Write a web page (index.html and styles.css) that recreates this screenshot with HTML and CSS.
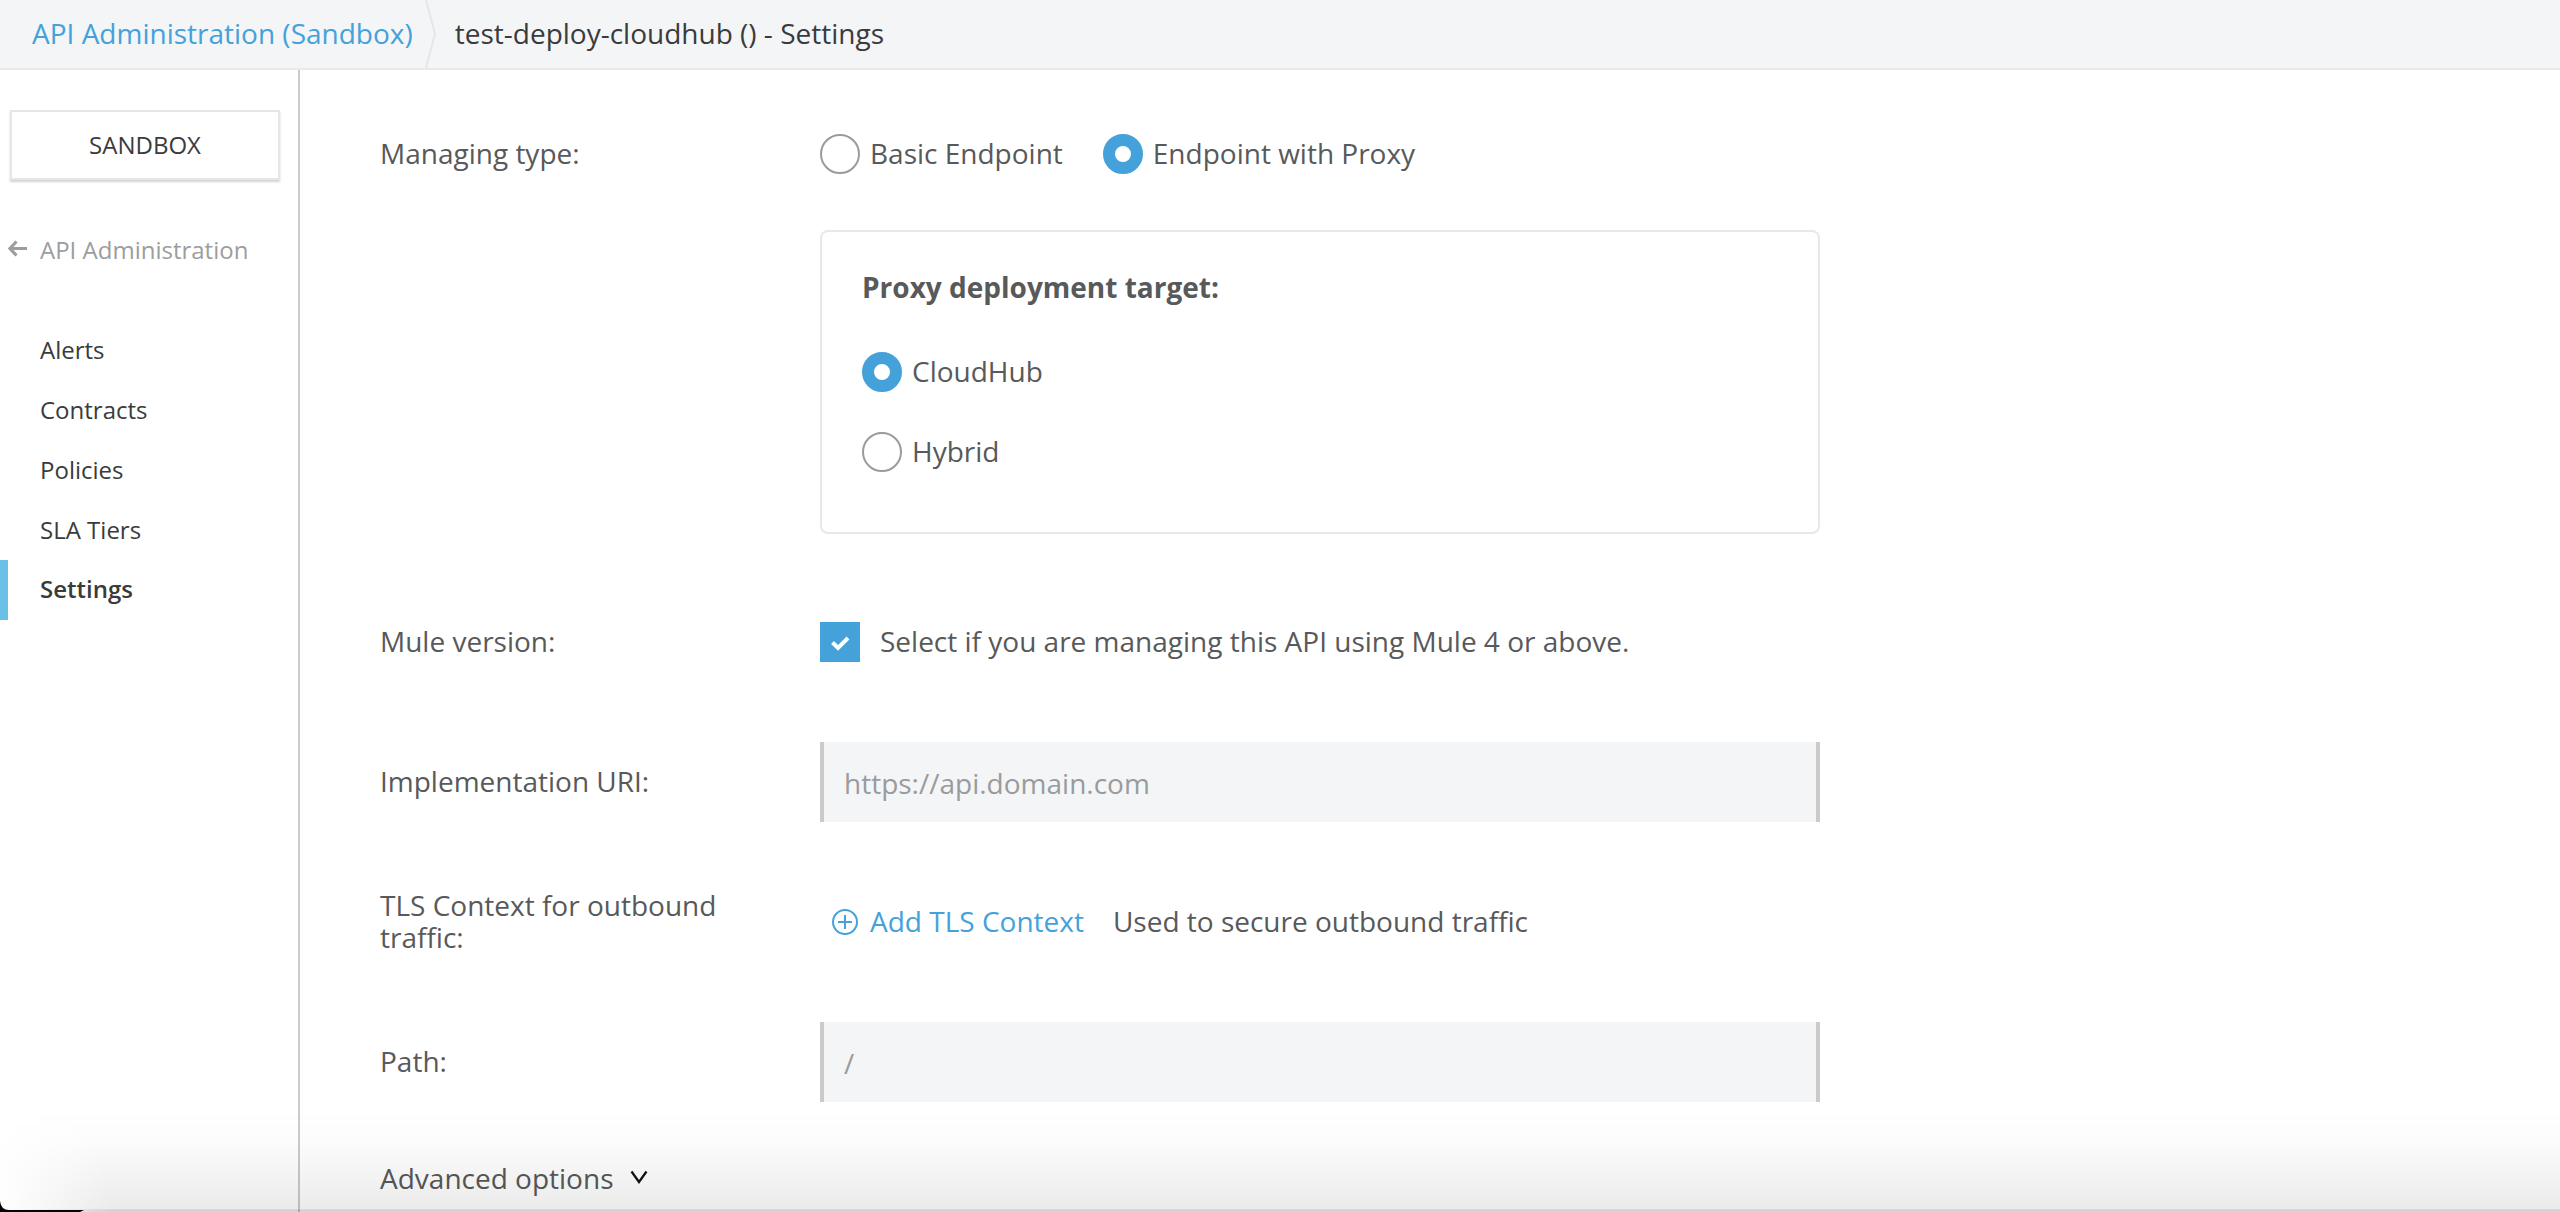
FILE: index.html
```html
<!DOCTYPE html>
<html lang="en">
<head>
<meta charset="utf-8">
<meta name="viewport" content="width=device-width, initial-scale=1">
<title>test-deploy-cloudhub () - Settings</title>
<link rel="stylesheet" href="styles.css">
</head>
<body>
<header class="topbar">
  <a class="crumb-link" href="#">API Administration (Sandbox)</a>
  <svg class="crumb-sep" viewBox="0 0 12 68" aria-hidden="true"><path d="M1 0 L10 34 L1 68" fill="none" stroke="#e5e6e8" stroke-width="2"/></svg>
  <h1 class="crumb-current">test-deploy-cloudhub () - Settings</h1>
</header>
<div class="layout">
  <aside class="sidebar">
    <button class="env-button" type="button">SANDBOX</button>
    <a class="back-link" href="#">
      <svg class="back-icon" viewBox="0 0 20 20" aria-hidden="true"><path d="M8.500 1.500 L2 8.500 L8.500 15.500 M2 8.500 H19" fill="none" stroke="currentColor" stroke-width="3.200"/></svg>
      <span>API Administration</span>
    </a>
    <nav class="menu">
      <a class="menu-item" href="#">Alerts</a>
      <a class="menu-item" href="#">Contracts</a>
      <a class="menu-item" href="#">Policies</a>
      <a class="menu-item" href="#">SLA Tiers</a>
      <a class="menu-item active" href="#" aria-current="page">Settings</a>
    </nav>
  </aside>
  <main class="content">
    <form class="settings">
      <div class="row row-top" role="radiogroup" aria-labelledby="managing">
        <span class="row-label" id="managing">Managing type:</span>
        <div class="managing">
          <div class="choices">
            <label class="choice"><input class="radio" type="radio" name="type"><span class="text">Basic Endpoint</span></label>
            <label class="choice"><input class="radio" type="radio" name="type" checked><span class="text">Endpoint with Proxy</span></label>
          </div>
          <fieldset class="target">
            <legend class="target-title">Proxy deployment target:</legend>
            <label class="choice"><input class="radio" type="radio" name="target" checked><span class="text">CloudHub</span></label>
            <label class="choice"><input class="radio" type="radio" name="target"><span class="text">Hybrid</span></label>
          </fieldset>
        </div>
      </div>
      <div class="row">
        <span class="row-label">Mule version:</span>
        <label class="check">
          <span class="check-box">
            <input class="check-input" type="checkbox" checked>
            <svg class="check-mark" viewBox="0 0 40 40" aria-hidden="true"><path d="M12.500 20.500 L18 26 L28 16" fill="none" stroke="#fff" stroke-width="4"/></svg>
          </span>
          <span class="text">Select if you are managing this API using Mule 4 or above.</span>
        </label>
      </div>
      <div class="row">
        <label class="row-label" for="uri">Implementation URI:</label>
        <input class="field" id="uri" type="text" placeholder="https://api.domain.com">
      </div>
      <div class="row">
        <span class="row-label">TLS Context for outbound traffic:</span>
        <div class="tls">
          <button class="add-button" type="button">
            <svg class="add-icon" viewBox="0 0 26 26" aria-hidden="true"><path d="M13 6 V20 M6 13 H20" stroke="currentColor" stroke-width="2"/><circle cx="13" cy="13" r="12" fill="none" stroke="currentColor" stroke-width="2"/></svg>
            <span class="text">Add TLS Context</span>
          </button>
          <span class="text">Used to secure outbound traffic</span>
        </div>
      </div>
      <div class="row">
        <label class="row-label" for="path">Path:</label>
        <input class="field" id="path" type="text" placeholder="/">
      </div>
      <button class="advanced" type="button">
        <span class="text">Advanced options</span>
        <svg class="advanced-icon" viewBox="0 0 18 18" aria-hidden="true"><path d="M1.500 1.500 L9 12 L16.500 1.500" fill="none" stroke="#111" stroke-width="2.200"/></svg>
      </button>
    </form>
  </main>
</div>
<div class="window-shade" aria-hidden="true"></div>
<svg class="window-corner" viewBox="0 0 84 12" aria-hidden="true"><path d="M0 1 Q1 10 9 10 H84 L80 12 H0 Z" fill="#000"/></svg>
</body>
</html>
```
FILE: styles.css
```css
* {
  box-sizing: border-box;
}

body {
  margin: 0;
  height: 100vh;
  display: flex;
  flex-direction: column;
  overflow: hidden;
  background: #fff;
  color: #58595a;
  font-family: "Open Sans", sans-serif;
  font-size: 28px;
  line-height: 32px;
}

a {
  color: inherit;
  text-decoration: none;
}

button {
  padding: 0;
  border: 0;
  background: none;
  color: inherit;
  font: inherit;
  cursor: pointer;
}

.topbar {
  display: flex;
  flex: none;
  align-items: center;
  height: 70px;
  padding-left: 32px;
  background: #f4f5f7;
  border-bottom: 2px solid #e8e9ea;
}

.crumb-link {
  padding-bottom: 2px;
  color: #45a1da;
}

.crumb-sep {
  width: 12px;
  height: 68px;
  margin: 0 18px 0 12px;
}

.crumb-current {
  margin: 0;
  padding-bottom: 2px;
  color: #3a3b3c;
  font-size: 28px;
  font-weight: 400;
}

.layout {
  display: flex;
  flex: 1;
  min-height: 0;
}

.sidebar {
  flex: none;
  width: 300px;
  padding-top: 40px;
  border-right: 2px solid #cacbcc;
  color: #3a3b3c;
  font-size: 24px;
}

.env-button {
  display: block;
  width: 270px;
  height: 70px;
  margin-left: 10px;
  border: 2px solid #e5e6e7;
  background: #fff;
  box-shadow: 0 2px 2px #d4d4d4;
}

.back-link {
  display: flex;
  align-items: center;
  gap: 12px;
  margin: 54px 0 54px 8px;
  color: #9c9d9e;
}

.back-icon {
  width: 20px;
  height: 20px;
}

.menu-item {
  display: flex;
  align-items: center;
  height: 60px;
  padding-left: 40px;
}

.menu-item.active {
  padding: 0 0 2px 32px;
  border-left: 8px solid #6bc0e8;
  font-weight: 600;
}

.content {
  flex: 1;
  min-width: 0;
  padding: 44px 80px 0;
}

.settings {
  display: flex;
  flex-direction: column;
  gap: 60px;
}

.row {
  display: grid;
  grid-template-columns: 360px minmax(0, 1000px);
  column-gap: 80px;
  align-items: center;
  min-height: 80px;
}

.row-label,
.text {
  padding-bottom: 2px;
}

.row-top {
  align-items: start;
  padding-bottom: 8px;
}

.row-top .row-label {
  padding-top: 23px;
}

.choices {
  display: flex;
  align-items: center;
  gap: 40px;
  height: 80px;
}

.choice {
  display: flex;
  align-items: center;
  gap: 10px;
}

.radio {
  appearance: none;
  flex: none;
  width: 40px;
  height: 40px;
  margin: 0;
  border: 2px solid #9a9b9c;
  border-radius: 50%;
  background: #fff;
}

.radio:checked {
  border: 12px solid #45a1da;
}

.target {
  display: flex;
  flex-direction: column;
  gap: 40px;
  margin: 36px 0 0;
  padding: 39px 40px 60px;
  border: 2px solid #e8e8e8;
  border-radius: 8px;
}

.target-title {
  float: left;
  padding: 0;
  margin-bottom: 9px;
  font-weight: 700;
}

.check {
  display: flex;
  align-items: center;
  gap: 20px;
}

.check-box {
  display: grid;
  flex: none;
}

.check-input,
.check-mark {
  grid-area: 1 / 1;
  width: 40px;
  height: 40px;
  margin: 0;
}

.check-input {
  appearance: none;
  background: #fff;
  border: 2px solid #9a9b9c;
}

.check-input:checked {
  background: #45a1da;
  border: 0;
}

.check-mark {
  pointer-events: none;
}

.field {
  width: 100%;
  height: 80px;
  padding: 2px 20px 0;
  border: solid #cacacb;
  border-width: 0 4px;
  border-radius: 0;
  background: #f4f5f7;
  color: inherit;
  font: inherit;
}

.field::placeholder {
  color: #9a9b9c;
  opacity: 1;
}

.tls {
  display: flex;
  align-items: center;
  gap: 29px;
  padding-left: 12px;
}

.add-button {
  display: flex;
  align-items: center;
  gap: 12px;
  color: #45a1da;
}

.add-icon {
  width: 26px;
  height: 26px;
}

.advanced {
  display: flex;
  align-items: center;
  align-self: flex-start;
  gap: 17px;
}

.advanced-icon {
  width: 18px;
  height: 18px;
}

/* shadow cast over the lower edge of the window */
.window-shade {
  position: fixed;
  right: 0;
  bottom: 0;
  left: 0;
  height: 102px;
  background: linear-gradient(to bottom, transparent, rgba(0, 0, 0, 0.010) 30%, rgba(0, 0, 0, 0.080) 97%, rgba(0, 0, 0, 0.200) 98%, rgba(0, 0, 0, 0.150));
  mask-image: linear-gradient(80deg, transparent, #000 110px);
  pointer-events: none;
}

.window-corner {
  position: fixed;
  bottom: 0;
  left: 0;
  width: 84px;
  height: 12px;
}
```
